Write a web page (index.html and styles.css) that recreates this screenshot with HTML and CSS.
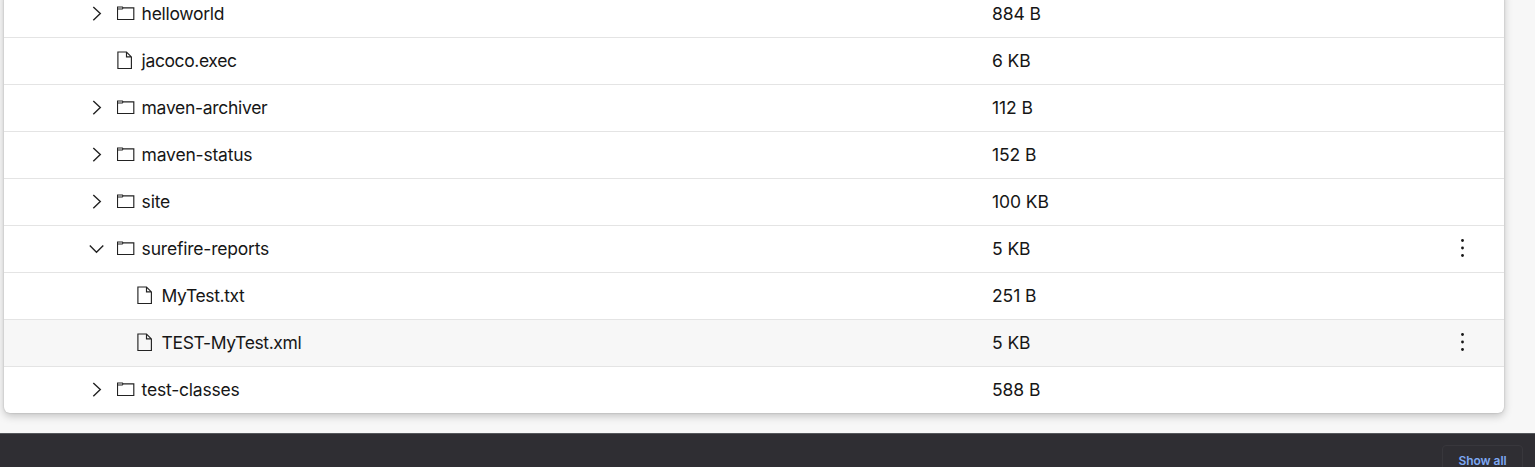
FILE: index.html
```html
<!DOCTYPE html>
<html lang="en">
<head>
<meta charset="utf-8">
<title>Workspace files</title>
<link rel="stylesheet" href="styles.css">
</head>
<body>
<svg class="defs" aria-hidden="true">
  <symbol id="right" viewBox="0 0 16 16"><path d="M4.3 .9 11.3 7.6 4.3 14.3"/></symbol>
  <symbol id="down" viewBox="0 0 16 16"><path d="M.8 4.6 7.5 11.3 14.3 4.6"/></symbol>
  <symbol id="folder" viewBox="0 0 18 18"><path d="M.5 2H5.4L6.2 2.9H16.8V14.5H.5ZM.5 4H5.3L6.2 2.9"/></symbol>
  <symbol id="file" viewBox="0 0 18 19"><path d="M.9 1H9.5L14.4 5.9V17.5H.9ZM9.5 1V5.9H14.4"/></symbol>
  <symbol id="dots" viewBox="0 0 4 20"><circle cx="1.5" cy="1.5" r="1.4"/><circle cx="1.5" cy="9" r="1.4"/><circle cx="1.5" cy="16.5" r="1.4"/></symbol>
</svg>
<main class="page">
  <section class="tree">
    <div class="row"><div class="name"><svg class="chevron"><use href="#right"/></svg><svg class="icon"><use href="#folder"/></svg><span>helloworld</span></div><div class="size">884 B</div></div>
    <div class="row"><div class="name leaf"><svg class="icon file"><use href="#file"/></svg><span class="tight">jacoco.exec</span></div><div class="size">6 KB</div></div>
    <div class="row"><div class="name"><svg class="chevron"><use href="#right"/></svg><svg class="icon"><use href="#folder"/></svg><span>maven-archiver</span></div><div class="size">112 B</div></div>
    <div class="row"><div class="name"><svg class="chevron"><use href="#right"/></svg><svg class="icon"><use href="#folder"/></svg><span class="loose">maven-status</span></div><div class="size">152 B</div></div>
    <div class="row"><div class="name"><svg class="chevron"><use href="#right"/></svg><svg class="icon"><use href="#folder"/></svg><span class="loose">site</span></div><div class="size">100 KB</div></div>
    <div class="row"><div class="name"><svg class="chevron"><use href="#down"/></svg><svg class="icon"><use href="#folder"/></svg><span class="loose">surefire-reports</span></div><div class="size">5 KB</div><svg class="menu"><use href="#dots"/></svg></div>
    <div class="row"><div class="name leaf nested"><svg class="icon file"><use href="#file"/></svg><span class="tight">MyTest.txt</span></div><div class="size">251 B</div></div>
    <div class="row hover"><div class="name leaf nested"><svg class="icon file"><use href="#file"/></svg><span class="tight">TEST-MyTest.xml</span></div><div class="size">5 KB</div><svg class="menu"><use href="#dots"/></svg></div>
    <div class="row"><div class="name"><svg class="chevron"><use href="#right"/></svg><svg class="icon"><use href="#folder"/></svg><span class="loose">test-classes</span></div><div class="size">588 B</div></div>
  </section>
</main>
<footer class="downloads"><div class="show-all">Show all</div></footer>
</body>
</html>
```
FILE: styles.css
```css
* { box-sizing: border-box; }
body {
  display: flex;
  flex-direction: column;
  height: 467px;
  margin: 0;
  overflow: hidden;
  background: #f7f7f7;
  color: #161616;
  font-family: Inter, "Liberation Sans", sans-serif;
}
.defs { position: absolute; width: 0; height: 0; }
.page {
  display: flex;
  flex-direction: column;
  justify-content: flex-end;
  height: 433px;
  flex: none;
  padding: 0 31px 20px 4px;
  overflow: hidden;
}
.tree {
  flex: none;
  border-radius: 0 0 6px 6px;
  background: #fff;
  box-shadow: 0 3px 9px rgba(0, 0, 0, .22), 0 0 2px rgba(0, 0, 0, .2);
}
.row {
  display: grid;
  grid-template-columns: 988px 1fr 83px;
  align-items: center;
  height: 47px;
  border-bottom: 1px solid #e4e4e4;
  font-size: 17.5px;
  font-weight: 430;
  line-height: 24px;
}
.row:last-child { height: 46px; border-bottom: 0; }
.hover { background: #f7f7f7; }
.name {
  display: flex;
  align-items: center;
  padding-left: 85px;
  letter-spacing: -.3px;
}
.leaf { padding-left: 113px; }
.nested { padding-left: 133px; }
.tight { letter-spacing: -.39px; }
.loose { letter-spacing: -.2px; }
.size { letter-spacing: -.08px; }
.chevron, .icon {
  flex: none;
  fill: none;
  stroke: #222;
  stroke-width: 1.15;
}
.chevron { width: 16px; height: 16px; margin-right: 12px; stroke-width: 1.4; }
.icon { width: 18px; height: 18px; margin-right: 6.6px; }
.file { height: 19px; margin-bottom: 1px; }
.menu {
  width: 4px;
  height: 20px;
  margin-bottom: 1px;
  justify-self: center;
  fill: #161616;
}
.downloads {
  display: flex;
  justify-content: flex-end;
  height: 34px;
  flex: none;
  padding: 11px 12px 0 0;
  border-top: 1px solid #55575b;
  background: #2f2e33;
}
.show-all {
  width: 81px;
  height: 30px;
  padding-top: 7px;
  border: 1px solid #38373c;
  border-radius: 4px;
  color: #7ea9f4;
  font-size: 12px;
  font-weight: 600;
  letter-spacing: -.05px;
  line-height: 15px;
  text-align: center;
}
```
